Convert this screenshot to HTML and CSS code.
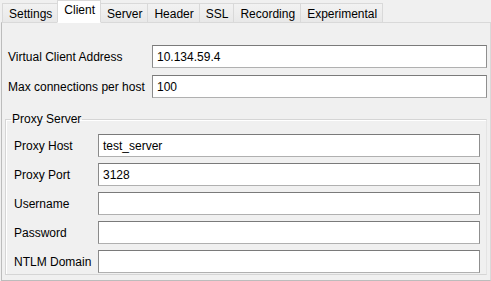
FILE: index.html
```html
<!DOCTYPE html>
<html lang="en">
<head>
    <meta charset="UTF-8" />
    <title>Client</title>
    <link rel="stylesheet" href="styles.css">
</head>
<body>
    <div class="tabs">
        <div class="tab">Settings</div>
        <div class="tab active">Client</div>
        <div class="tab">Server</div>
        <div class="tab">Header</div>
        <div class="tab">SSL</div>
        <div class="tab">Recording</div>
        <div class="tab">Experimental</div>
    </div>

    <div class="panel">
        <div class="row">
            <label>Virtual Client Address</label>
            <div class="field">10.134.59.4</div>
        </div>
        <div class="row">
            <label>Max connections per host</label>
            <div class="field">100</div>
        </div>

        <fieldset class="group">
            <legend>Proxy Server</legend>
            <div class="row small">
                <label>Proxy Host</label>
                <div class="field">test_server</div>
            </div>
            <div class="row small">
                <label>Proxy Port</label>
                <div class="field">3128</div>
            </div>
            <div class="row small">
                <label>Username</label>
                <div class="field"></div>
            </div>
            <div class="row small">
                <label>Password</label>
                <div class="field"></div>
            </div>
            <div class="row small">
                <label>NTLM Domain</label>
                <div class="field"></div>
            </div>
        </fieldset>
    </div>
</body>
</html>
```

FILE: styles.css
```css
* {
    box-sizing: border-box;
}

body {
    margin: 0;
    width: 491px;
    height: 281px;
    overflow: hidden;
    background: #f0f0f0;
    font-family: "Liberation Sans", Arial, sans-serif;
    font-size: 12px;
    color: #000;
}

/* tab strip */
.tabs {
    display: flex;
    align-items: flex-end;
    height: 22px;
    padding-left: 2px;
    position: relative;
    z-index: 1;
}

.tab {
    height: 20px;
    padding: 3px 5px 0 6px;
    margin-bottom: -1px;
    border: 1px solid #d9d9d9;
    border-right: none;
    background: linear-gradient(#f2f2f2, #e8e8e8);
    line-height: 14px;
}

.tab:last-child {
    border-right: 1px solid #d9d9d9;
}

.tab.active {
    height: 23px;
    padding-top: 2px;
    background: #ffffff;
    border-bottom-color: #ffffff;
    border-right: 1px solid #d9d9d9;
}

.tab.active + .tab {
    border-left: none;
}

/* content */
.panel {
    height: 259px;
    border: 1px solid #d9d9d9;
    border-left-color: #bcbcbc;
    border-bottom-color: #bcbcbc;
    margin: 0 0 0 1px;
    padding: 22px 3px 0 6px;
}

.row {
    display: flex;
    align-items: center;
    height: 23px;
    margin-bottom: 7px;
}

.row label {
    width: 144px;
    flex: none;
}

.field {
    flex: 1;
    height: 23px;
    background: #fff;
    border: 1px solid #abadb3;
    border-top-color: #7a7a7a;
    border-left-color: #8a8a8a;
    border-right-color: #8f8f8f;
    border-bottom-color: #b0b0b0;
    padding: 4px 4px 0 4px;
    line-height: 14px;
}

.group {
    margin: 14px 0 0 -3px;
    padding: 8px 6px 0 8px;
    height: 163px;
    border: 1px solid #d5d5d5;
    border-right-color: #e4e4e4;
    box-shadow: inset 1px 1px 0 #fff;
}

.group legend {
    padding: 0 1px;
    margin-left: -3px;
}

.row.small {
    margin-bottom: 6px;
}

.row.small label {
    width: 84px;
}
```
